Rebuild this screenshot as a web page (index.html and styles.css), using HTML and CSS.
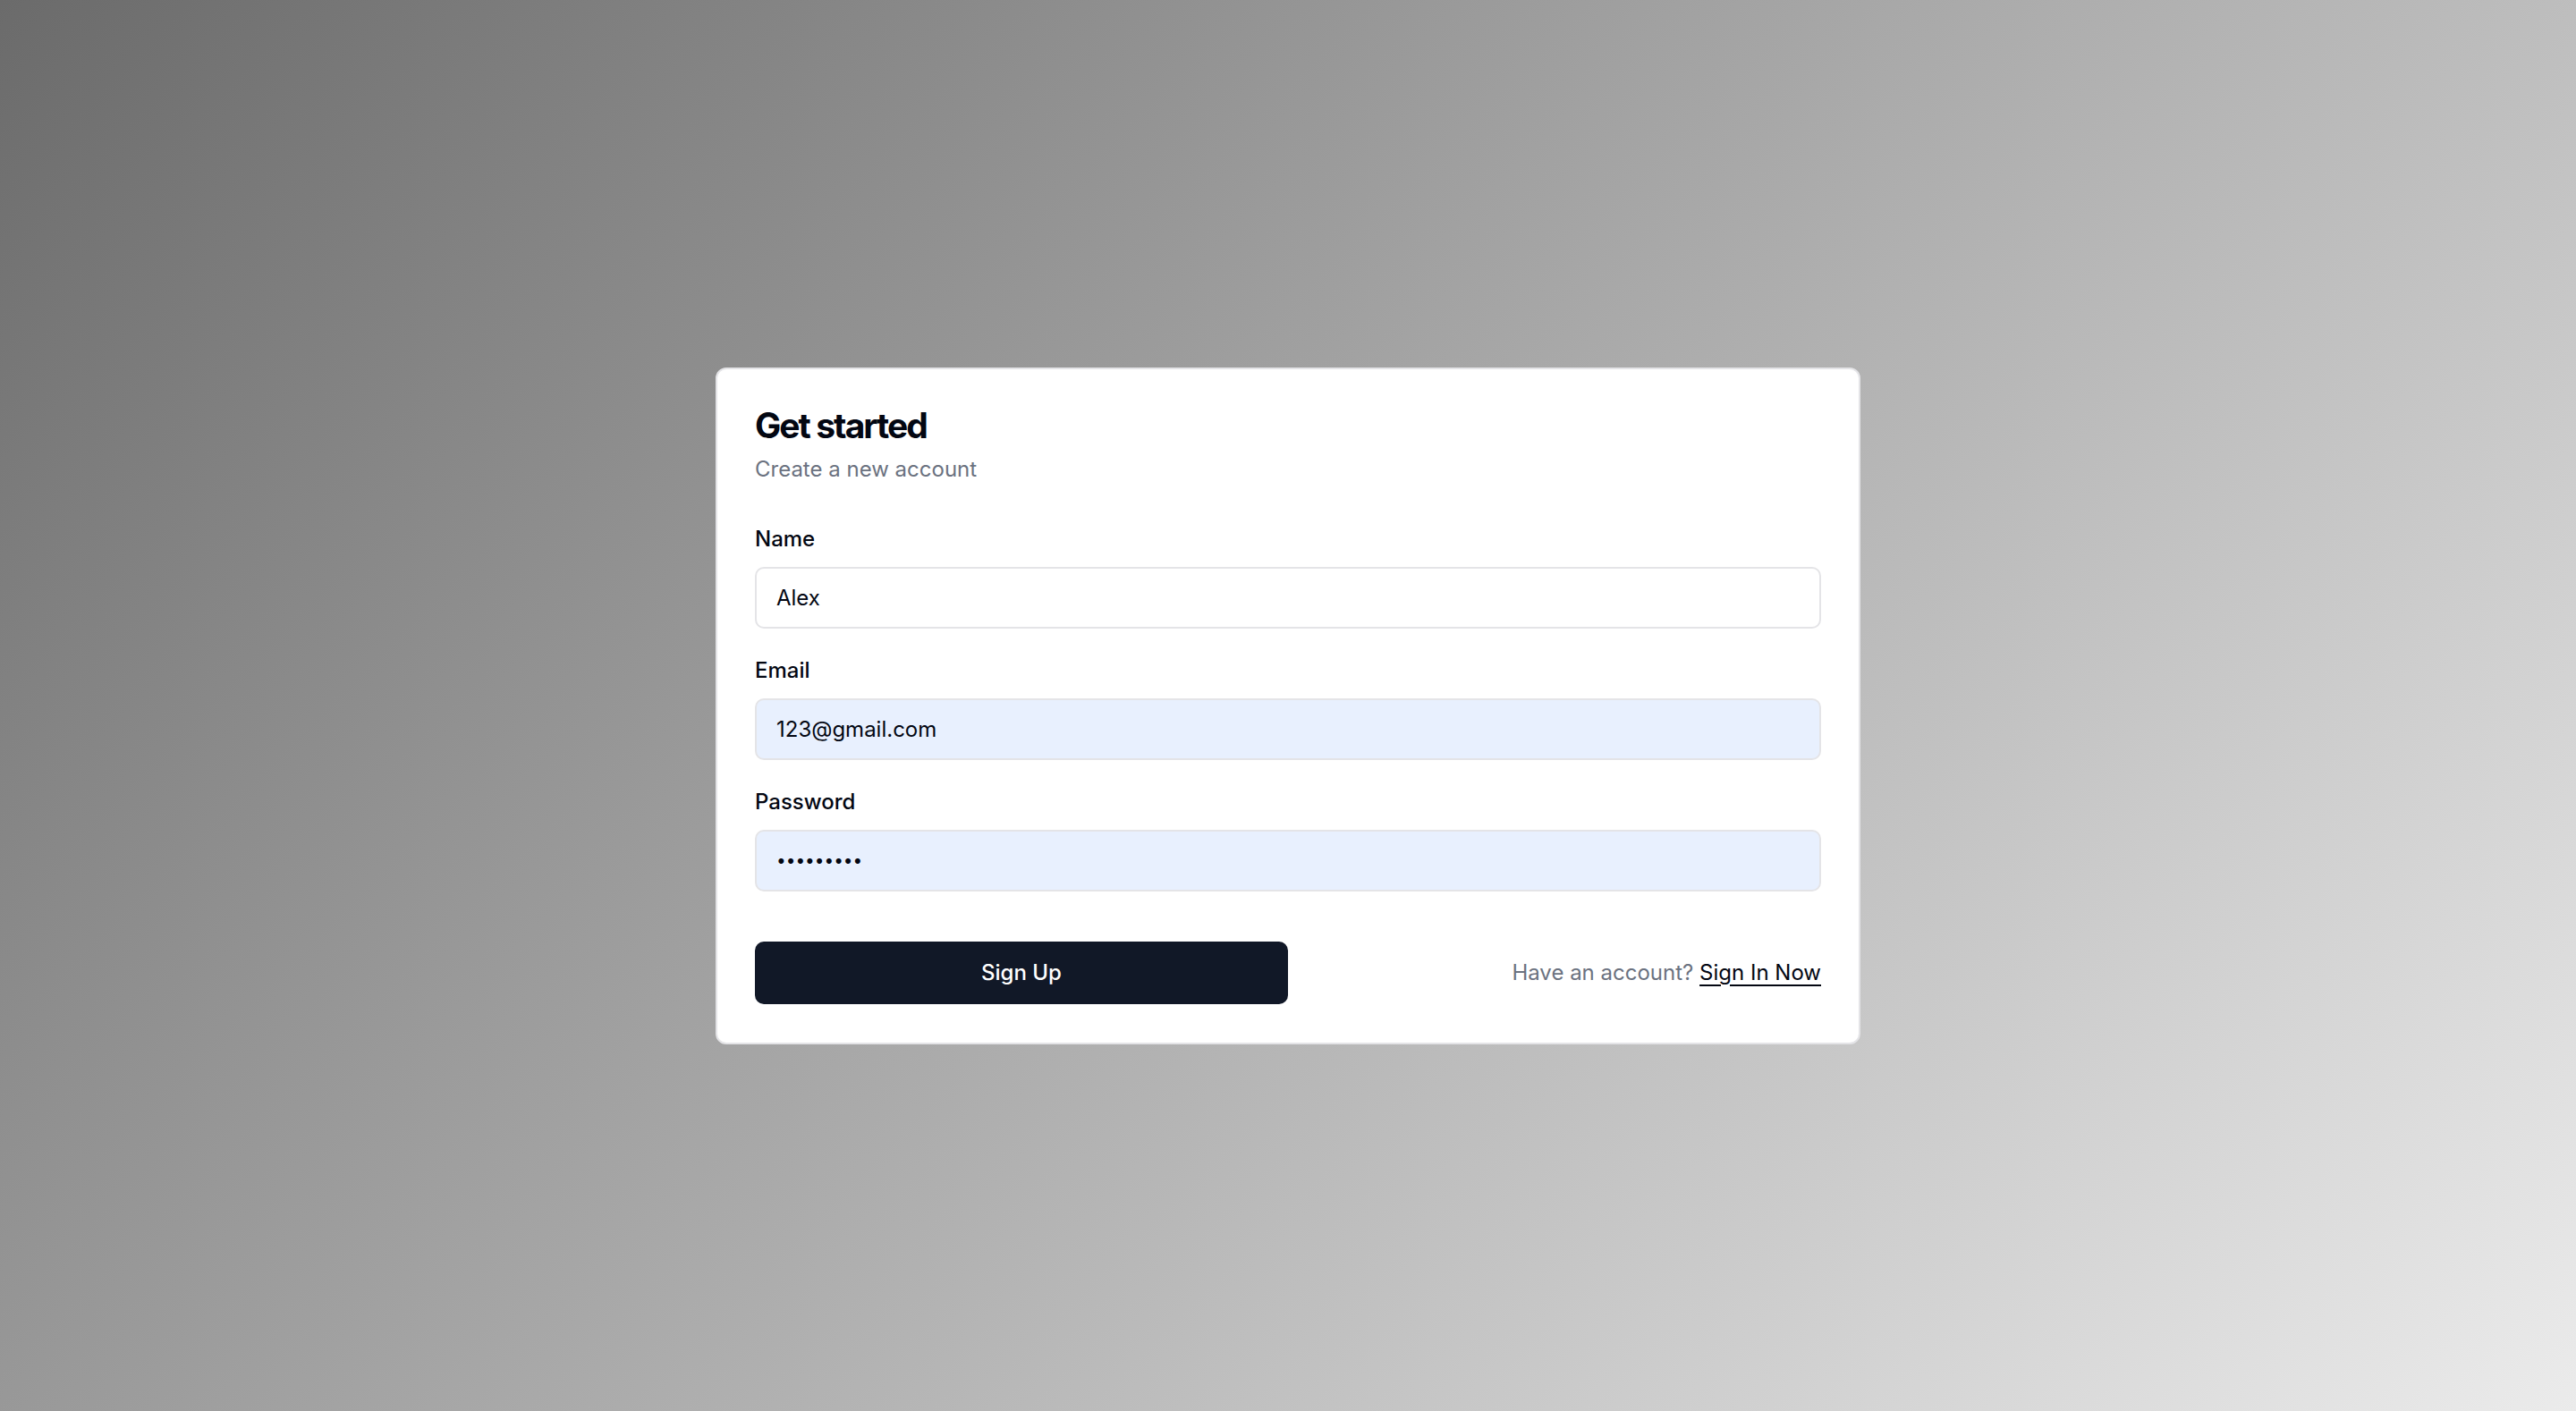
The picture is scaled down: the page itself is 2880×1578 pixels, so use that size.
FILE: index.html
```html
<!DOCTYPE html>
<html lang="en">
<head>
<meta charset="utf-8">
<title>Get started</title>
<link rel="stylesheet" href="styles.css">
</head>
<body>
<main class="page">
  <form class="card">
    <header class="card-header">
      <h1 class="title">Get started</h1>
      <p class="subtitle">Create a new account</p>
    </header>
    <div class="fields">
      <div class="field">
        <label class="label" for="name">Name</label>
        <input class="input" id="name" type="text" value="Alex">
      </div>
      <div class="field">
        <label class="label" for="email">Email</label>
        <input class="input input-filled" id="email" type="email" value="123@gmail.com">
      </div>
      <div class="field">
        <label class="label" for="password">Password</label>
        <input class="input input-filled input-password" id="password" type="password" value="123456789">
      </div>
    </div>
    <div class="actions">
      <button class="btn" type="button">Sign Up</button>
      <p class="switch">Have an account? <a class="switch-link" href="#">Sign In Now</a></p>
    </div>
  </form>
</main>
</body>
</html>
```
FILE: styles.css
```css
* {
  box-sizing: border-box;
}

html, body {
  margin: 0;
  padding: 0;
  height: 100%;
}

body {
  font-family: Inter, "Liberation Sans", sans-serif;
  color: #09090b;
  background: linear-gradient(135deg, #6b6b6b 0%, #ebebeb 100%);
}

.page {
  height: 100vh;
  display: flex;
  align-items: center;
  justify-content: center;
}

.card {
  width: 1280px;
  background: #ffffff;
  border: 2px solid #e4e4e7;
  border-radius: 12px;
  padding: 43px 42px 43px;
  display: flex;
  flex-direction: column;
}

.card-header {
  display: flex;
  flex-direction: column;
}

.title {
  margin: 0;
  font-size: 39px;
  line-height: 40px;
  font-weight: 700;
  letter-spacing: -0.05em;
  color: #030712;
}

.subtitle {
  margin: 13px 0 0;
  font-size: 24px;
  line-height: 32px;
  color: #6b7280;
}

.fields {
  margin-top: 46px;
  display: flex;
  flex-direction: column;
  gap: 31px;
}

.field {
  display: flex;
  flex-direction: column;
}

.label {
  font-size: 24px;
  line-height: 32px;
  font-weight: 500;
  color: #030712;
  margin-bottom: 15px;
}

.input {
  height: 69px;
  width: 100%;
  border: 2px solid #e4e4e7;
  border-radius: 10px;
  padding: 0 22px;
  font-family: inherit;
  font-size: 24px;
  color: #030712;
  background: #ffffff;
  outline: none;
}

.input-filled {
  background: #e8f0fe;
}

.input-password {
  font-size: 19px;
  letter-spacing: 0;
}

.actions {
  margin-top: 56px;
  display: grid;
  grid-template-columns: 1fr 1fr;
  align-items: center;
}

.btn {
  height: 70px;
  border: none;
  border-radius: 10px;
  background: #111827;
  color: #ffffff;
  font-family: inherit;
  font-size: 24px;
  font-weight: 500;
  cursor: pointer;
}

.switch {
  margin: 0;
  text-align: right;
  font-size: 24px;
  line-height: 32px;
  color: #6b7280;
}

.switch-link {
  color: #030712;
  text-decoration: underline;
  text-decoration-thickness: 2px;
  text-underline-offset: 5px;
}
```
